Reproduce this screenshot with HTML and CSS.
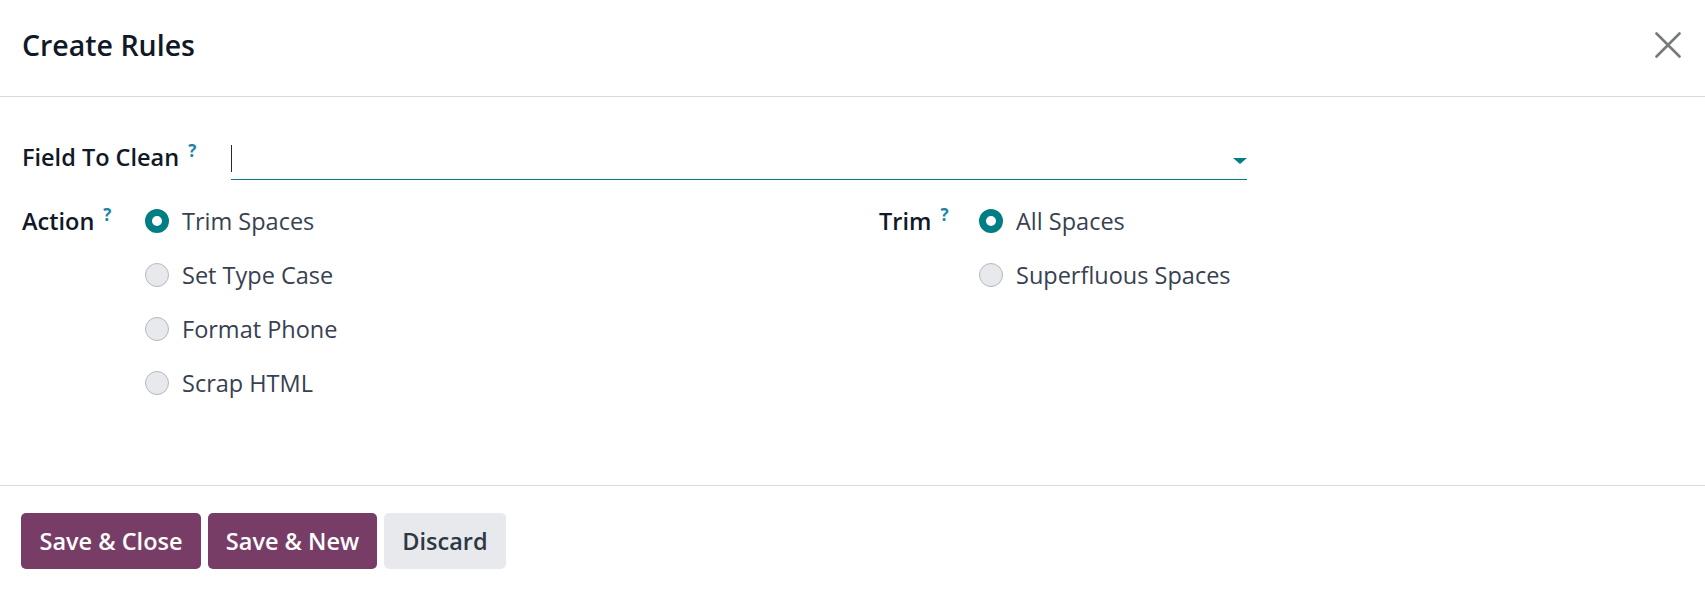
FILE: index.html
```html
<!DOCTYPE html>
<html lang="en">
<head>
<meta charset="utf-8">
<title>Create Rules</title>
<link rel="stylesheet" href="styles.css">
</head>
<body>
<div class="dialog">
  <header class="head">
    <h4 class="title">Create Rules</h4>
    <button class="close" type="button" aria-label="Close">
      <svg width="26" height="26" viewBox="0 0 26 26"><path d="M1.5 1.5 L24.5 24.5 M24.5 1.5 L1.5 24.5" stroke="#777a7d" stroke-width="2.6" stroke-linecap="round" fill="none"/></svg>
    </button>
  </header>
  <main class="body">
    <div class="row-field">
      <label class="lbl lbl-field">Field To Clean<sup class="help">?</sup></label>
      <div class="select">
        <span class="caret-cursor"></span>
        <span class="tri"></span>
      </div>
    </div>
    <div class="groups">
      <div class="group g-left">
        <label class="lbl lbl-action">Action<sup class="help">?</sup></label>
        <div class="radios">
          <div class="opt"><span class="radio on"></span><span class="txt">Trim Spaces</span></div>
          <div class="opt"><span class="radio"></span><span class="txt">Set Type Case</span></div>
          <div class="opt"><span class="radio"></span><span class="txt">Format Phone</span></div>
          <div class="opt"><span class="radio"></span><span class="txt">Scrap HTML</span></div>
        </div>
      </div>
      <div class="group g-right">
        <label class="lbl lbl-trim">Trim<sup class="help">?</sup></label>
        <div class="radios">
          <div class="opt"><span class="radio on"></span><span class="txt">All Spaces</span></div>
          <div class="opt"><span class="radio"></span><span class="txt">Superfluous Spaces</span></div>
        </div>
      </div>
    </div>
  </main>
  <footer class="foot">
    <button class="btn primary btn-close" type="button">Save &amp; Close</button>
    <button class="btn primary btn-new" type="button">Save &amp; New</button>
    <button class="btn secondary btn-discard" type="button">Discard</button>
  </footer>
</div>
</body>
</html>
```
FILE: styles.css
```css
html, body {
  margin: 0;
  padding: 0;
  background: #ffffff;
}
body {
  font-family: "Open Sans", "Noto Sans", sans-serif;
  color: #374151;
}
.dialog {
  width: 1705px;
  height: 595px;
  display: flex;
  flex-direction: column;
}
.head {
  box-sizing: border-box;
  height: 97px;
  border-bottom: 1px solid #d8dadd;
  display: flex;
  align-items: center;
  justify-content: space-between;
  padding: 0 24px 6px 22px;
  flex: none;
}
.title {
  margin: 0;
  font-size: 28.5px;
  line-height: 34px;
  font-weight: 600;
  color: #111827;
}
.close {
  border: 0;
  background: none;
  padding: 0;
  width: 26px;
  height: 26px;
  display: flex;
}
.body {
  padding: 43px 0 85px 22px;
}
.lbl {
  font-size: 23.5px;
  line-height: 34px;
  font-weight: 600;
  color: #111827;
  flex: none;
  white-space: nowrap;
}
.help {
  font-size: 17px;
  font-weight: 700;
  color: #1a84a3;
  margin-left: 9px;
  vertical-align: top;
  line-height: 16px;
  display: inline-block;
  margin-top: 3px;
}
.row-field {
  display: flex;
}
.lbl-field {
  width: 209px;
}
.select {
  box-sizing: border-box;
  width: 1016px;
  height: 40px;
  border-bottom: 1px solid #017e84;
  display: flex;
  align-items: flex-start;
  justify-content: space-between;
}
.caret-cursor {
  width: 1px;
  height: 27px;
  margin-top: 5px;
  background: #1f2937;
}
.tri {
  width: 0;
  height: 0;
  margin-top: 18px;
  border-left: 7px solid transparent;
  border-right: 7px solid transparent;
  border-top: 6px solid #017e84;
}
.groups {
  display: flex;
  margin-top: 24px;
}
.group {
  display: flex;
}
.g-left {
  width: 857px;
}
.lbl-action {
  width: 123px;
}
.lbl-trim {
  width: 100px;
}
.radios {
  display: flex;
  flex-direction: column;
  gap: 20px;
}
.opt {
  display: flex;
  align-items: center;
  gap: 13px;
  height: 34px;
  font-size: 23.5px;
  white-space: nowrap;
}
.radio {
  box-sizing: border-box;
  width: 24px;
  height: 24px;
  border-radius: 50%;
  background: #e7e9ed;
  border: 1px solid #b4b8be;
  flex: none;
}
.radio.on {
  background: #ffffff;
  border: 7.5px solid #017e84;
}
.txt {
  line-height: 34px;
  color: #374151;
}
.foot {
  border-top: 1px solid #d8dadd;
  padding: 27px 0 0 21px;
  display: flex;
  gap: 7px;
}
.btn {
  box-sizing: border-box;
  height: 56px;
  border: 0;
  border-radius: 5px;
  font-family: "Open Sans", "Noto Sans", sans-serif;
  font-size: 23.5px;
  font-weight: 600;
  padding: 0;
  white-space: nowrap;
  text-align: center;
}
.primary {
  background: #773d67;
  color: #ffffff;
}
.secondary {
  background: #e7e9ed;
  color: #2f3744;
}
.btn-close { width: 180px; }
.btn-new { width: 169px; }
.btn-discard { width: 122px; }
```
